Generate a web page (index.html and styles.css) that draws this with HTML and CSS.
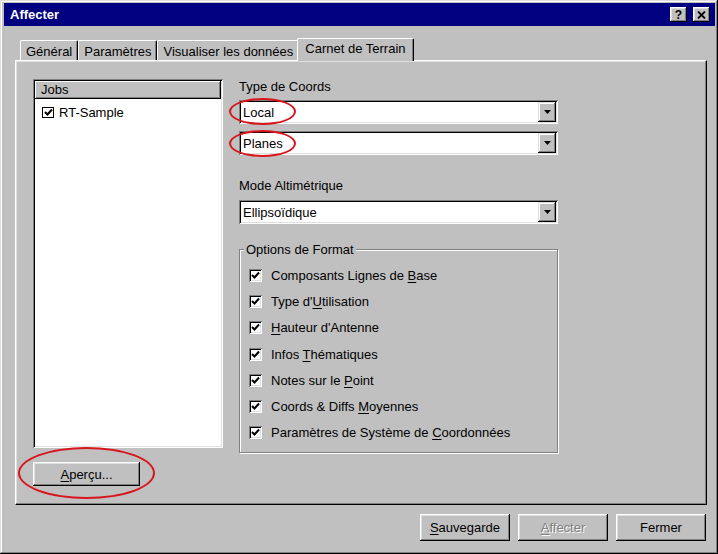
FILE: index.html
```html
<!DOCTYPE html>
<html lang="fr">

<head>
    <meta charset="UTF-8">
    <title>Affecter</title>
    <link rel="stylesheet" href="styles.css">
</head>

<body>
    <div class="window">
        <div class="titlebar">
            <span class="title">Affecter</span>
            <div class="caption-buttons">
                <span class="caption-btn help">?</span>
                <span class="caption-btn">
                    <svg width="9" height="8" viewBox="0 0 9 8"><path d="M1 0.5 L8 7.5 M8 0.5 L1 7.5" stroke="#000" stroke-width="1.8"/></svg>
                </span>
            </div>
        </div>

        <div class="dialog">
            <div class="tabs">
                <div class="tab">Général</div>
                <div class="tab">Paramètres</div>
                <div class="tab">Visualiser les données</div>
                <div class="tab active">Carnet de Terrain</div>
            </div>

            <div class="panel">
                <div class="left-col">
                    <div class="listview">
                        <div class="list-header">Jobs</div>
                        <div class="list-item">
                            <span class="list-check">
                                <svg width="9" height="9" viewBox="0 0 9 9"><path d="M1 4 L3.5 6.5 L8 1.5" fill="none" stroke="#000" stroke-width="2"/></svg>
                            </span>
                            <span>RT-Sample</span>
                        </div>
                    </div>
                    <div class="preview-row">
                        <button class="btn preview-btn"><u>A</u>perçu...</button>
                        <span class="ring ring-preview"></span>
                    </div>
                </div>

                <div class="right-col">
                    <div class="field-label">Type de Coords</div>
                    <div class="combo">
                        <span class="combo-text">Local</span>
                        <span class="combo-arrow"><svg width="7" height="4" viewBox="0 0 7 4"><polygon points="0,0 7,0 3.5,4" fill="#000"/></svg></span>
                        <span class="ring ring-local"></span>
                    </div>
                    <div class="combo second">
                        <span class="combo-text">Planes</span>
                        <span class="combo-arrow"><svg width="7" height="4" viewBox="0 0 7 4"><polygon points="0,0 7,0 3.5,4" fill="#000"/></svg></span>
                        <span class="ring ring-planes"></span>
                    </div>

                    <div class="field-label spaced">Mode Altimétrique</div>
                    <div class="combo">
                        <span class="combo-text">Ellipsoïdique</span>
                        <span class="combo-arrow"><svg width="7" height="4" viewBox="0 0 7 4"><polygon points="0,0 7,0 3.5,4" fill="#000"/></svg></span>
                    </div>

                    <div class="groupbox">
                        <span class="legend">Options de Format</span>
                        <label class="option"><span class="checkbox"><svg width="9" height="9" viewBox="0 0 9 9"><path d="M1 4 L3.5 6.5 L8 1.5" fill="none" stroke="#000" stroke-width="2"/></svg></span><span>Composants Lignes de <u>B</u>ase</span></label>
                        <label class="option"><span class="checkbox"><svg width="9" height="9" viewBox="0 0 9 9"><path d="M1 4 L3.5 6.5 L8 1.5" fill="none" stroke="#000" stroke-width="2"/></svg></span><span>Type d'<u>U</u>tilisation</span></label>
                        <label class="option"><span class="checkbox"><svg width="9" height="9" viewBox="0 0 9 9"><path d="M1 4 L3.5 6.5 L8 1.5" fill="none" stroke="#000" stroke-width="2"/></svg></span><span><u>H</u>auteur d'Antenne</span></label>
                        <label class="option"><span class="checkbox"><svg width="9" height="9" viewBox="0 0 9 9"><path d="M1 4 L3.5 6.5 L8 1.5" fill="none" stroke="#000" stroke-width="2"/></svg></span><span>Infos <u>T</u>hématiques</span></label>
                        <label class="option"><span class="checkbox"><svg width="9" height="9" viewBox="0 0 9 9"><path d="M1 4 L3.5 6.5 L8 1.5" fill="none" stroke="#000" stroke-width="2"/></svg></span><span>Notes sur le <u>P</u>oint</span></label>
                        <label class="option"><span class="checkbox"><svg width="9" height="9" viewBox="0 0 9 9"><path d="M1 4 L3.5 6.5 L8 1.5" fill="none" stroke="#000" stroke-width="2"/></svg></span><span>Coords &amp; Diffs <u>M</u>oyennes</span></label>
                        <label class="option"><span class="checkbox"><svg width="9" height="9" viewBox="0 0 9 9"><path d="M1 4 L3.5 6.5 L8 1.5" fill="none" stroke="#000" stroke-width="2"/></svg></span><span>Paramètres de Système de <u>C</u>oordonnées</span></label>
                    </div>
                </div>
            </div>

            <div class="footer">
                <button class="btn"><u>S</u>auvegarde</button>
                <button class="btn disabled"><u>A</u>ffecter</button>
                <button class="btn">Fermer</button>
            </div>
        </div>
    </div>
</body>

</html>
```

FILE: styles.css
```css
* {
    box-sizing: border-box;
    margin: 0;
    padding: 0;
}

body {
    background: #c0c0c0;
    font-family: "Liberation Sans", Arial, sans-serif;
    font-size: 13px;
    color: #000;
}

u {
    text-decoration: underline;
    text-underline-offset: 2px;
}

.window {
    width: 718px;
    height: 554px;
    padding: 3px 3px 3px 4px;
    background: #c0c0c0;
    box-shadow: inset -1px -1px #000, inset 1px 1px #dfdfdf, inset -2px -2px #808080, inset 2px 2px #fff;
    display: flex;
    flex-direction: column;
}

/* caption bar */
.titlebar {
    height: 23px;
    background: #000080;
    display: flex;
    align-items: center;
    justify-content: space-between;
    padding: 0 5px 0 6px;
}

.title {
    color: #fff;
    font-weight: bold;
    font-size: 13px;
}

.caption-buttons {
    display: flex;
    gap: 6px;
}

.caption-btn {
    width: 17px;
    height: 15px;
    background: #c0c0c0;
    display: flex;
    align-items: center;
    justify-content: center;
    box-shadow: inset -1px -1px #000, inset 1px 1px #fff, inset -2px -2px #808080, inset 2px 2px #dfdfdf;
}

.caption-btn.help {
    font-weight: bold;
    font-size: 12px;
    line-height: 1;
}

/* dialog contents */
.dialog {
    flex: 1;
    padding: 12px 8px 8px 11px;
    display: flex;
    flex-direction: column;
}

.tabs {
    display: flex;
    align-items: flex-end;
    height: 22px;
    padding-left: 5px;
    position: relative;
    z-index: 1;
}

.tab {
    height: 20px;
    padding: 1px 5px 0;
    line-height: 19px;
    white-space: nowrap;
    border-top: 1px solid #fff;
    border-left: 1px solid #fff;
    border-right: 1px solid #000;
    border-radius: 2px 2px 0 0;
    box-shadow: inset -1px 0 #808080;
    background: #c0c0c0;
}

.tab.active {
    height: 23px;
    margin: 0 -2px -1px -2px;
    padding: 0 7px;
    line-height: 20px;
    position: relative;
}

.panel {
    height: 445px;
    display: flex;
    gap: 16px;
    padding: 18px 17px;
    border-top: 1px solid #fff;
    border-left: 1px solid #fff;
    border-right: 1px solid #000;
    border-bottom: 1px solid #000;
    box-shadow: inset -1px -1px #808080, inset 1px 1px #dfdfdf;
}

/* jobs list */
.left-col {
    width: 190px;
    display: flex;
    flex-direction: column;
}

.listview {
    height: 371px;
    background: #fff;
    padding: 2px;
    box-shadow: inset 1px 1px #808080, inset -1px -1px #fff, inset 2px 2px #000, inset -2px -2px #dfdfdf;
}

.list-header {
    height: 18px;
    line-height: 17px;
    padding-left: 6px;
    background: #c0c0c0;
    box-shadow: inset -1px -1px #000, inset 1px 1px #fff, inset -2px -2px #808080;
}

.list-item {
    display: flex;
    align-items: center;
    gap: 5px;
    padding: 5px 0 0 7px;
    height: 22px;
}

.list-check {
    width: 12px;
    height: 11px;
    display: flex;
    align-items: center;
    justify-content: center;
    border: 1px solid #000;
}

.preview-row {
    position: relative;
    margin-top: 14px;
    width: 107px;
}

.btn {
    font-family: inherit;
    font-size: 13px;
    color: #000;
    background: #c0c0c0;
    border: none;
    height: 27px;
    width: 90px;
    box-shadow: inset -1px -1px #000, inset 1px 1px #fff, inset -2px -2px #808080, inset 2px 2px #dfdfdf;
}

.preview-btn {
    width: 107px;
    height: 24px;
}

.btn.disabled {
    color: #808080;
    text-shadow: 1px 1px #fff;
}

/* highlight rings */
.ring {
    position: absolute;
    border: 2px solid #d8141c;
    border-radius: 50%;
    pointer-events: none;
}

.ring-preview {
    left: -15px;
    top: -15px;
    width: 137px;
    height: 52px;
}

.ring-local {
    left: -10px;
    top: -2px;
    width: 67px;
    height: 27px;
}

.ring-planes {
    left: -10px;
    top: -1px;
    width: 67px;
    height: 27px;
}

/* coordinate settings */
.right-col {
    width: 319px;
    display: flex;
    flex-direction: column;
}

.field-label {
    line-height: 15px;
    margin-bottom: 6px;
}

.field-label.spaced {
    margin-top: 23px;
    margin-bottom: 7px;
}

.combo {
    position: relative;
    height: 24px;
    background: #fff;
    display: flex;
    align-items: center;
    justify-content: space-between;
    padding: 2px;
    box-shadow: inset 1px 1px #808080, inset -1px -1px #fff, inset 2px 2px #000, inset -2px -2px #dfdfdf;
}

.combo.second {
    margin-top: 7px;
}

.combo-text {
    padding-left: 2px;
}

.combo-arrow {
    width: 18px;
    height: 20px;
    background: #c0c0c0;
    display: flex;
    align-items: center;
    justify-content: center;
    box-shadow: inset -1px -1px #000, inset 1px 1px #dfdfdf, inset -2px -2px #808080, inset 2px 2px #fff;
}

.groupbox {
    position: relative;
    margin-top: 25px;
    height: 204px;
    padding: 12px 0 0 9px;
    border: 1px solid #808080;
    box-shadow: inset 1px 1px #fff, 1px 1px #fff;
}

.legend {
    position: absolute;
    top: -8px;
    left: 4px;
    padding: 0 2px;
    line-height: 15px;
    background: #c0c0c0;
}

.option {
    display: flex;
    align-items: center;
    gap: 9px;
    height: 26.3px;
}

.checkbox {
    width: 13px;
    height: 13px;
    background: #fff;
    display: flex;
    align-items: center;
    justify-content: center;
    box-shadow: inset 1px 1px #808080, inset -1px -1px #fff, inset 2px 2px #000, inset -2px -2px #dfdfdf;
}

.footer {
    display: flex;
    justify-content: flex-end;
    gap: 8px;
    margin-top: 9px;
    padding-right: 1px;
}
```
